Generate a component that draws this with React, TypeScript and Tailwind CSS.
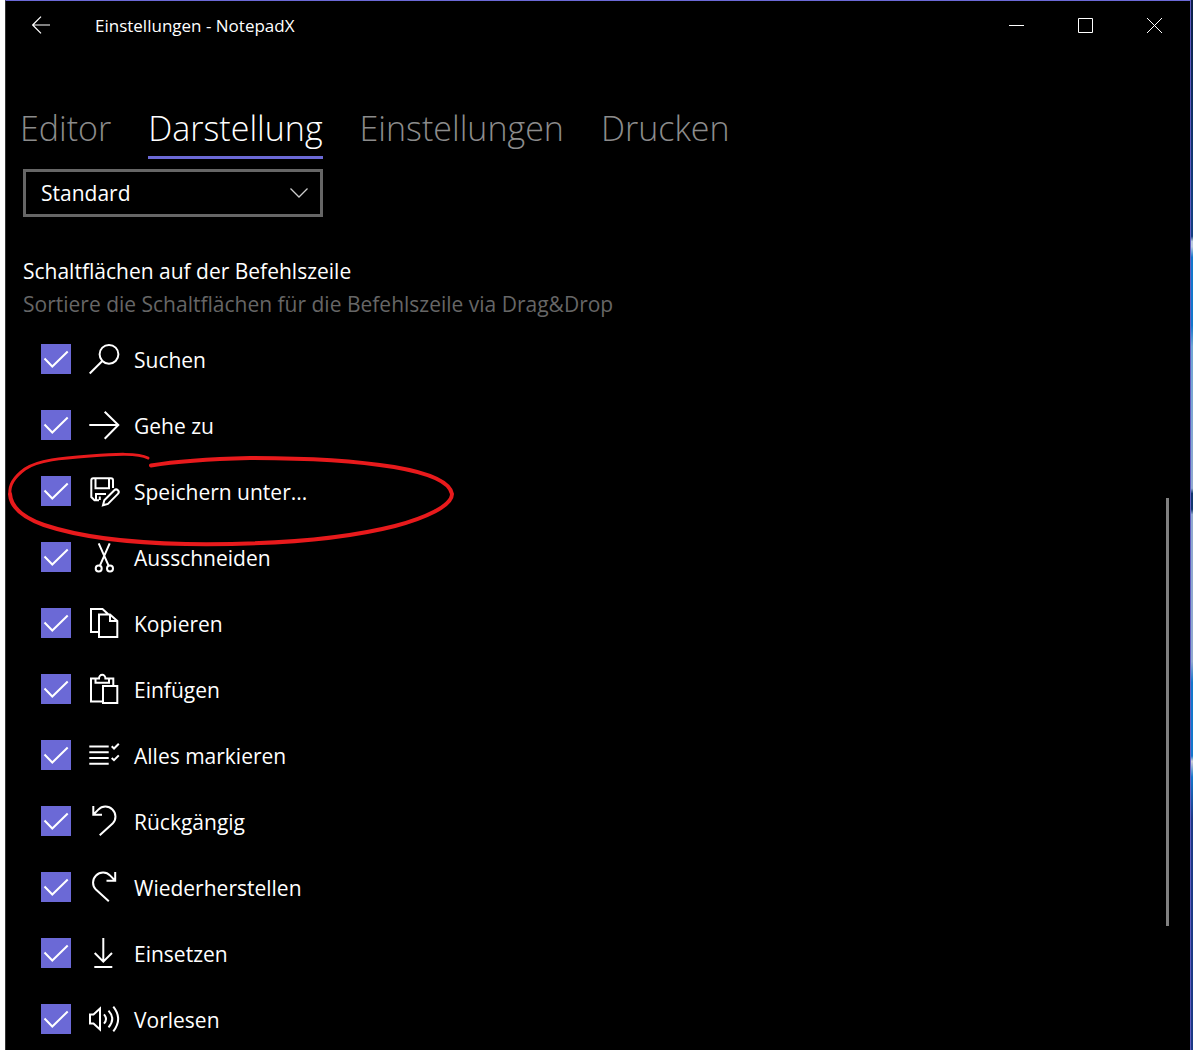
import type { ReactNode } from "react";

type Command = { id: string; label: string; icon: ReactNode; marked?: boolean };

const commands: Command[] = [
  {
    id: "suchen",
    label: "Suchen",
    icon: (
      <>
        <circle cx="20" cy="10.3" r="9.4" />
        <path d="M13.3 17 0.7 29.5" />
      </>
    ),
  },
  { id: "gehe-zu", label: "Gehe zu", icon: <path d="M0.3 15H29.3M15.7 1.7 29.3 15 15.7 28.7" /> },
  {
    id: "speichern-unter",
    label: "Speichern unter...",
    marked: true,
    icon: (
      <>
        <path d="M10 24.2H5.5L2.3 21V4.3A2 2 0 0 1 4.3 2.3H22A2 2 0 0 1 24 4.3V12" />
        <path d="M6.5 2.5V12.3H20V2.5M7 24V18H17M10.8 20.5V24" />
        <path d="M14 29.3 15.3 24.3 25.3 14.3A2.4 2.4 0 0 1 28.9 17.9L18.9 27.9Z" />
      </>
    ),
  },
  {
    id: "ausschneiden",
    label: "Ausschneiden",
    icon: (
      <>
        <path d="M9.7 1.3 19.6 23.6M20.7 1.3 10.9 23.6" />
        <circle cx="9.7" cy="26.4" r="3" />
        <circle cx="21" cy="26.4" r="3" />
      </>
    ),
  },
  {
    id: "kopieren",
    label: "Kopieren",
    icon: <path d="M9.5 24H2V1H13.5L19.5 6.5M10 6.5H21L28.3 13V29H10ZM21 6.5V13H28.3" />,
  },
  {
    id: "einfuegen",
    label: "Einfügen",
    icon: (
      <path d="M13.5 27.5H2V4.5H6.5M20 4.5H24.3V11M6.5 4.5H10A3.2 3.7 0 0 1 16.4 4.5H20V8.7H6.5ZM14 12H28.3V29H14Z" />
    ),
  },
  {
    id: "alles-markieren",
    label: "Alles markieren",
    icon: (
      <path d="M0.3 6.4H19.7M0.3 12.2H19.7M0.3 18H19.7M0.3 23.8H19.7M22.7 6.3 25 8.5 29.8 3.7M22.7 18 25 20.2 29.8 15.4" />
    ),
  },
  {
    id: "rueckgaengig",
    label: "Rückgängig",
    icon: <path d="M4.3 0V8.7H13M4.5 8.5 9.3 3.6A10 10 0 0 1 23.6 17.6L10.7 29.3" />,
  },
  {
    id: "wiederherstellen",
    label: "Wiederherstellen",
    icon: <path d="M26.2 0V8.7H17.5M26 8.5 21.2 3.6A10 10 0 0 0 6.9 17.6L19.8 29.3" />,
  },
  {
    id: "einsetzen",
    label: "Einsetzen",
    icon: <path d="M14.3 0V23.5M5.7 15 14.3 23.6 23 15M5.3 29H23.3" />,
  },
  {
    id: "vorlesen",
    label: "Vorlesen",
    icon: (
      <path d="M1 10.5H4.5L11 4.5V25.5L4.5 19.5H1ZM15 10.3Q19 15 15 19.7M19.5 6.7Q27 15 19.5 23.3M24.3 2.7Q34 15 24.3 27.3" />
    ),
  },
];

const tabs = ["Editor", "Darstellung", "Einstellungen", "Drucken"];

function WindowButton({ label, d }: { label: string; d: string }) {
  return (
    <button type="button" aria-label={label} className="flex h-12 w-[69px] items-center justify-center">
      <svg width="15" height="15" viewBox="0 0 15 15" fill="none" stroke="currentColor" strokeWidth="1">
        <path d={d} />
      </svg>
    </button>
  );
}

function TitleBar() {
  return (
    <header className="flex h-12 items-center pr-px">
      <button type="button" aria-label="Zurück" className="flex h-12 w-[70px] items-center justify-center">
        <svg width="18" height="18" viewBox="0 0 18 18" fill="none" stroke="currentColor" strokeWidth="1.2">
          <path d="M0.5 9H18M9 0.7 0.7 9 9 17.3" />
        </svg>
      </button>
      <h1 className="grow pt-0.5 pl-[19px] text-[17px] leading-6">Einstellungen - NotepadX</h1>
      <WindowButton label="Minimieren" d="M0 7.5H15" />
      <WindowButton label="Maximieren" d="M0.5 0.5H14.5V14.5H0.5Z" />
      <WindowButton label="Schließen" d="M0 0 15 15M15 0 0 15" />
    </header>
  );
}

function CommandRow({ id, label, icon, marked }: Command) {
  return (
    <li className="relative flex h-[66px] items-center pl-[18px]">
      <span className="grid size-[30px]">
        <input
          id={id}
          type="checkbox"
          defaultChecked
          className="peer col-start-1 row-start-1 size-[30px] appearance-none border-2 border-[#999999] checked:border-0 checked:bg-[#6b69d6]"
        />
        <svg
          viewBox="0 0 30 30"
          fill="none"
          stroke="white"
          strokeWidth="2"
          className="pointer-events-none invisible col-start-1 row-start-1 size-[30px] peer-checked:visible"
        >
          <path d="M3.5 14.5 11.3 22.5 26.7 7.5" />
        </svg>
      </span>
      <label htmlFor={id} className="flex items-center gap-[15px] pl-[18px]">
        <svg
          width="30"
          height="30"
          viewBox="0 0 30 30"
          fill="none"
          stroke="currentColor"
          strokeWidth="2"
          className="overflow-visible"
        >
          {icon}
        </svg>
        <span className="pt-0.5 text-[21px] leading-8">{label}</span>
      </label>
      {marked && (
        <svg
          width="455"
          height="100"
          viewBox="5 450 455 100"
          fill="none"
          stroke="#e81a1c"
          strokeLinecap="round"
          className="pointer-events-none absolute -top-2 -left-[18px] z-10"
        >
          <path
            strokeWidth="3"
            d="M148 458C138 453 116 454 90 456C62 458 38 460 25 469C14 477 9 486 10 494"
          />
          <path
            strokeWidth="4"
            d="M10 494C11 509 27 519 44 525C80 537 130 543 186 544C265 545 340 540 395 526C425 518 452 506 452 494C450 482 429 473 394 467C350 460 290 458 250 458C212 459 178 461 151 465.500"
          />
        </svg>
      )}
    </li>
  );
}

export default function App() {
  return (
    <div className="flex h-screen overflow-hidden bg-white pl-[5px] font-['Open_Sans','Noto_Sans',sans-serif] text-white">
      <div className="flex min-w-0 grow flex-col border-t border-r border-l border-t-[#6b69d6] border-r-[#5f5cc0] border-l-[#333333] bg-black">
        <TitleBar />
        <div className="flex min-h-0 grow">
          <main className="min-w-0 grow overflow-hidden pl-[17px]">
            <div
              role="tablist"
              className="-ml-[3px] flex gap-[37px] pt-[51px] text-[34px] leading-[56px] font-[350]"
            >
              {tabs.map((tab) => {
                const active = tab === "Darstellung";
                return (
                  <button
                    key={tab}
                    type="button"
                    role="tab"
                    aria-selected={active}
                    className={
                      active
                        ? "border-b-[3px] border-[#6b69d6] text-white"
                        : "border-b-[3px] border-transparent text-[#8c8c8c]"
                    }
                  >
                    {tab}
                  </button>
                );
              })}
            </div>
            <div className="mt-[10px] grid h-12 w-[300px] items-center">
              <select
                aria-label="Stil der Befehlszeile"
                className="col-start-1 row-start-1 h-12 appearance-none border-[3px] border-[#666666] bg-black pt-0.5 pl-[15px] text-[21px]"
              >
                <option>Standard</option>
              </select>
              <svg
                width="18"
                height="10"
                viewBox="0 0 18 10"
                fill="none"
                stroke="#cccccc"
                strokeWidth="1.3"
                className="pointer-events-none col-start-1 row-start-1 mr-[15px] justify-self-end"
              >
                <path d="M0.5 0.5 9 9 17.5 0.5" />
              </svg>
            </div>
            <h2 className="mt-[38px] text-[21px] leading-8">Schaltflächen auf der Befehlszeile</h2>
            <p className="mt-px text-[21px] leading-8 text-[#666666]">
              Sortiere die Schaltflächen für die Befehlszeile via Drag&amp;Drop
            </p>
            <ul className="mt-1.5">
              {commands.map((command) => (
                <CommandRow key={command.id} {...command} />
              ))}
            </ul>
          </main>
          <div aria-hidden="true" className="flex w-6 shrink-0 flex-col">
            <div className="grow-[449]" />
            <div className="w-[3px] grow-[428] bg-[#808080]" />
            <div className="grow-[124]" />
          </div>
        </div>
      </div>
      <div className="w-0.5 shrink-0 bg-[linear-gradient(#0b1f48_0%,#123f80_20%,#123f80_22.5%,#b9cbe0_23%,#b9cbe0_23.500%,#1277cc_24.500%,#1277cc_31%,#6ea6d4_33%,#8fa9cf_46.500%,#10376f_47%,#10376f_48.500%,#8fa9cf_49%,#8fa9cf_63%,#1277cc_65%,#1277cc_72%,#d0d0d8_72.500%,#1277cc_74%,#1c3a86_78%,#1c3a86_100%)]" />
    </div>
  );
}
